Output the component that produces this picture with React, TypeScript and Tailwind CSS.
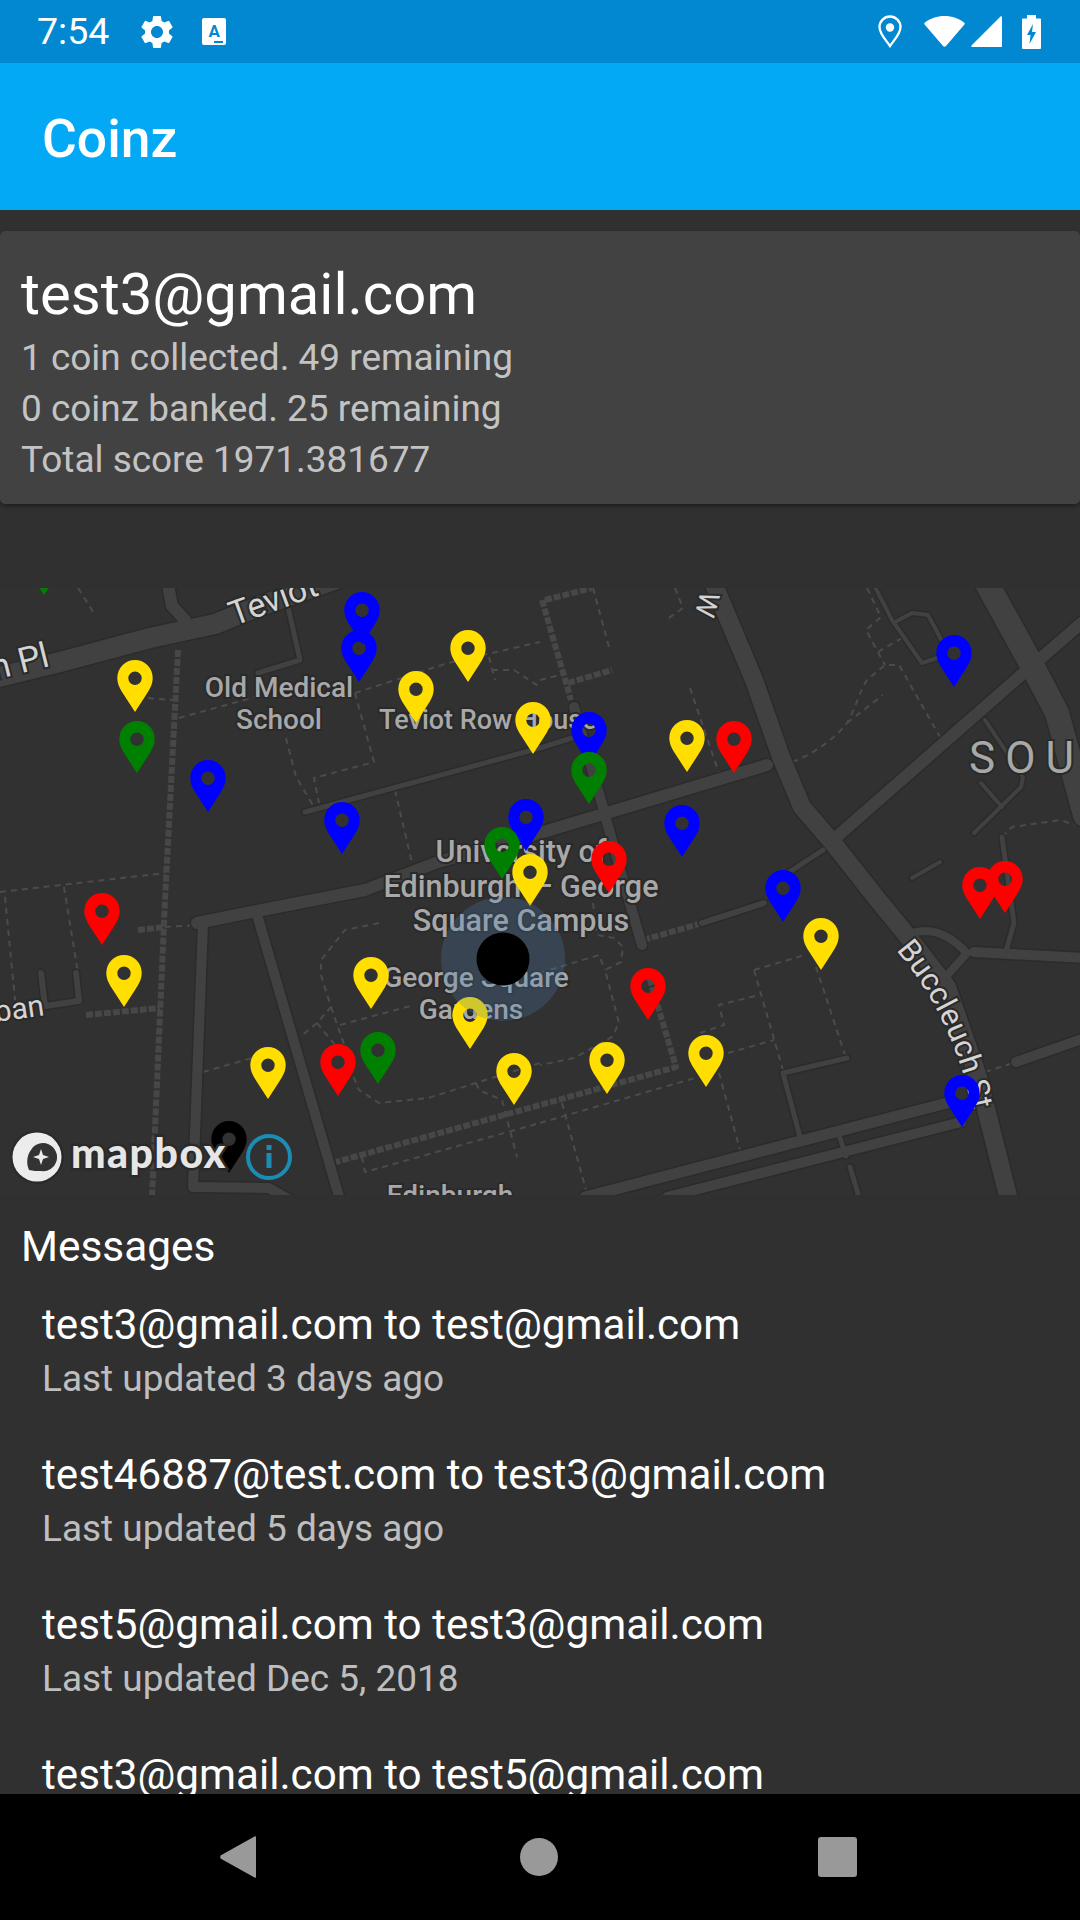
import { MdSettings } from 'react-icons/md';

type PinColor = '#ffde00' | '#0000ff' | '#ff0000' | '#008000' | '#000000';

const Y: PinColor = '#ffde00';
const B: PinColor = '#0000ff';
const R: PinColor = '#ff0000';
const G: PinColor = '#008000';

// tip of each marker, in page pixels, drawn in this order
const pins: [number, number, PinColor][] = [
  [44, 595, G],
  [362, 644, B],
  [359, 682, B],
  [468, 682, Y],
  [416, 723, Y],
  [135, 712, Y],
  [137, 773, G],
  [208, 812, B],
  [342, 854, B],
  [533, 754, Y],
  [954, 687, B],
  [589, 764, B],
  [589, 804, G],
  [687, 772, Y],
  [734, 773, R],
  [682, 857, B],
  [526, 851, B],
  [502, 879, G],
  [530, 906, Y],
  [609, 893, R],
  [783, 922, B],
  [1005, 913, R],
  [980, 919, R],
  [102, 945, R],
  [124, 1007, Y],
  [371, 1009, Y],
  [470, 1049, Y],
  [268, 1099, Y],
  [378, 1084, G],
  [338, 1096, R],
  [514, 1105, Y],
  [821, 970, Y],
  [648, 1020, R],
  [607, 1094, Y],
  [706, 1087, Y],
  [962, 1127, B],
  [229, 1173, '#000000'],
];

const roads: [string, number][] = [
  ['M-5 678 L60 662 L150 638 L215 624 L260 606 L345 576', 20],
  ['M168 585 L172 606 L185 620', 12],
  ['M282 580 L300 660 L258 673', 5],
  ['M305 812 L540 748 L572 738', 5],
  ['M197 923 L262 910 L365 890 L438 862 L540 833 L767 765', 12],
  ['M574 707 L598 790 L626 890 L642 945', 10],
  ['M203 923 L193 1187 L269 1188 L290 1200', 10],
  ['M258 918 L340 1200', 10],
  ['M702 923 L764 903', 6],
  ['M788 873 L823 850', 5],
  ['M712 580 L754 680 L781 757 L802 807 L833 843 L878 900 L905 933 L947 987 L978 1077 L1009 1200', 18],
  ['M833 840 L1019 677 L1085 620', 12],
  ['M985 580 L1033 667 L1057 713 L1085 815', 24],
  ['M585 1197 L947 1103', 11],
  ['M667 1197 L961 1122', 10],
  ['M1016 1062 L1085 1038', 10],
  ['M847 1058 L783 1073 L800 1137', 5],
  ['M840 1138 L846 1156', 5],
  ['M850 1167 L859 1197', 5],
  ['M912 933 C930 928 945 932 964 950', 8],
  ['M974 952 L1085 958', 10],
  ['M967 953 L943 980', 8],
  ['M1007 948 L1014 923 L1002 837', 5],
  ['M874 585 L892 620 L922 663 L940 657', 4],
  ['M895 622 L912 613 L928 615 L943 643', 4],
  ['M981 783 L1002 807', 4],
  ['M974 833 L1021 787 L1023 777 L985 720', 4],
  ['M940 862 L912 878', 4],
  ['M41 973 L45 1006 L79 1001 L76 973', 6],
];

// the stepped footpaths
const steps: string[] = [
  'M178 650 L165 900 L152 1197',
  'M542 600 L571 700',
  'M647 970 L676 1067 L336 1162',
  'M643 940 L702 923',
  'M568 683 L612 670',
  'M545 600 L592 588',
  'M138 930 L165 927',
  'M86 1015 L160 1008',
];

const paths: string[] = [
  'M78 588 L95 615',
  'M148 698 L172 700',
  'M179 718 L255 697',
  'M355 693 L448 663 L540 642',
  'M355 693 L374 762 L314 778 L319 803',
  'M286 738 L296 777 L314 807',
  'M489 657 L495 680',
  'M492 670 L514 670 L540 687',
  'M395 790 L412 863',
  'M0 892 L165 873',
  'M5 897 L15 1000',
  'M64 887 L78 973',
  'M165 927 L197 925',
  'M203 1072 L252 1058',
  'M379 923 L345 930 L321 960 L321 975 L331 1007 L317 1023 L300 1037',
  'M317 1023 L345 1057 L359 1090 L379 1103 L428 1098 L476 1083 L540 1063',
  'M340 1025 L414 1005',
  'M476 1083 L479 1090 L502 1100 L517 1157',
  'M331 1007 L345 1047',
  'M362 1157 L365 1172 L540 1123',
  'M593 903 L597 935 L614 938 L623 947 L621 962 L605 970 L619 1023 L612 1037 L574 1058 L540 1065',
  'M540 973 L599 955 L605 970',
  'M540 1123 L695 1078',
  'M562 1103 L586 1190',
  'M719 1073 L740 1150',
  'M728 1053 L774 1040',
  'M700 1033 L724 1025 L719 1005 L759 995',
  'M754 970 L783 1070',
  'M754 970 L805 955',
  'M816 967 L845 1055',
  'M593 588 L609 647',
  'M675 588 L683 608 L666 620',
  'M690 688 L719 773',
  'M540 680 L560 675',
  'M792 762 C816 753 835 738 847 723 C855 710 860 690 867 680 L885 665 L899 665 L940 737',
  'M847 723 L883 695',
  'M867 588 L881 617 L866 630 L885 665',
  'M878 652 L902 638',
  'M1002 837 L1012 827 L1061 820 L1074 825',
  'M985 1072 L1016 1062',
];

const Pin = ({ x, y, color }: { x: number; y: number; color: string }) => (
  <g transform={`translate(${x} ${y})`}>
    <path
      fill={color}
      fillRule="evenodd"
      d="M0 0L-11-17C-15-23-17.700-28-17.700-34.300A17.700 17.700 0 1 1 17.700-34.300C17.700-28 15-23 11-17ZM0-40.500A6.700 6.700 0 1 0 0-27.100A6.700 6.700 0 1 0 0-40.500Z"
    />
  </g>
);

const MapLabel = ({
  x,
  y,
  size = 28,
  children,
  anchor = 'middle',
}: {
  x: number;
  y: number;
  size?: number;
  children: string;
  anchor?: 'middle' | 'start';
}) => (
  <text
    x={x}
    y={y}
    textAnchor={anchor}
    fontSize={size}
    fontWeight="500"
    fill="#a8a8a8"
    stroke="#2a2a2a"
    strokeWidth="4"
    paintOrder="stroke"
  >
    {children}
  </text>
);

const RoadLabel = ({ transform, size, children }: { transform: string; size: number; children: string }) => (
  <text
    transform={transform}
    fontSize={size}
    fontWeight="400"
    fill="#d4d4d4"
    stroke="#2a2a2a"
    strokeWidth="4"
    paintOrder="stroke"
  >
    {children}
  </text>
);

const CityMap = () => (
  <svg
    viewBox="0 588 1080 607"
    className="block h-[607px] w-full shrink-0 bg-[#323131] font-['Roboto',sans-serif]"
  >
    <g fill="none" strokeLinecap="round" strokeLinejoin="round">
      {paths.map((d) => (
        <path key={d} d={d} stroke="#4b4b4b" strokeWidth="2" strokeDasharray="6 5" strokeLinecap="butt" />
      ))}
      {steps.map((d) => (
        <path key={d} d={d} stroke="#474747" strokeWidth="6" strokeDasharray="7 2" strokeLinecap="butt" />
      ))}
      {roads.map(([d, w]) => (
        <path key={d + 'c'} d={d} stroke="#2b2b2b" strokeWidth={w + 3} />
      ))}
      {roads.map(([d, w]) => (
        <path key={d} d={d} stroke="#414141" strokeWidth={w} />
      ))}
    </g>

    <MapLabel x={279} y={697}>Old Medical</MapLabel>
    <MapLabel x={279} y={729}>School</MapLabel>
    <MapLabel x={379} y={729} anchor="start" size={27}>Teviot Row House</MapLabel>
    <MapLabel x={521} y={862} size={30.500}>University of</MapLabel>
    <MapLabel x={521} y={897} size={30.500}>Edinburgh — George</MapLabel>
    <MapLabel x={521} y={931} size={30.500}>Square Campus</MapLabel>
    <MapLabel x={476} y={987}>George Square</MapLabel>
    <MapLabel x={471} y={1019}>Gardens</MapLabel>
    <MapLabel x={450} y={1205}>Edinburgh</MapLabel>

    <RoadLabel transform="translate(-6 680) rotate(-14)" size={35}>n Pl</RoadLabel>
    <RoadLabel transform="translate(234 626) rotate(-20)" size={34}>Teviot</RoadLabel>
    <RoadLabel transform="translate(-4 1022) rotate(-8)" size={30}>ban</RoadLabel>
    <RoadLabel transform="translate(701 590) rotate(105)" size={28}>W</RoadLabel>
    <text
      x={969}
      y={773}
      fontSize="44"
      letterSpacing="10"
      fill="#a8a8a8"
      stroke="#2a2a2a"
      strokeWidth="4"
      paintOrder="stroke"
    >
      SOUTH
    </text>
    <path id="buccleuch" d="M896 950Q960 1025 978 1138" fill="none" />
    <text fontSize="31" fill="#d4d4d4" stroke="#2a2a2a" strokeWidth="4" paintOrder="stroke">
      <textPath href="#buccleuch">Buccleuch St</textPath>
    </text>

    {pins.map(([x, y, color]) => (
      <Pin key={`${x}-${y}`} x={x} y={y} color={color} />
    ))}

    {/* user location */}
    <circle cx="503" cy="959" r="62" fill="#4a7fb5" fillOpacity="0.25" />
    <circle cx="503" cy="959" r="26.500" fill="#000000" />

    {/* mapbox logo */}
    <circle cx="37" cy="1157" r="27" fill="#2a2a2a" />
    <circle cx="37" cy="1157" r="24.500" fill="#ececec" />
    <path d="M29 1170C26 1163 27 1155 31 1150A14 14 0 1 1 41 1171C37 1171 33 1171 29 1170Z" fill="#333333" />
    <path d="M41 1149L43 1155L49 1157L43 1159L41 1165L39 1159L33 1157L39 1155Z" fill="#ececec" />
    <text
      x={71}
      y={1168}
      fontSize="41"
      fontWeight="900"
      letterSpacing="1.500"
      fill="#e6e6e6"
      stroke="#2a2a2a"
      strokeWidth="5"
      paintOrder="stroke"
      fontFamily="Lato, sans-serif"
    >
      mapbox
    </text>
    <circle cx="269" cy="1157" r="21" fill="none" stroke="#1b8db5" strokeWidth="4" />
    <rect x="266.500" y="1153" width="5" height="15" fill="#1b8db5" />
    <rect x="266.500" y="1145" width="5" height="5" fill="#1b8db5" />
  </svg>
);

const StatusBar = () => (
  <div className="flex h-[63px] shrink-0 items-center justify-between bg-[#0288d1] pl-[37px] pr-[39px] text-white">
    <div className="flex items-center">
      <span className="text-[37.500px] leading-none">7:54</span>
      <MdSettings className="ml-[28px] h-[40px] w-[40px]" />
      <div className="relative ml-[25px] flex h-[27px] w-[24px] items-center justify-center rounded-[2px] bg-white">
        <span className="text-[17px] font-bold leading-none text-[#0288d1]">A</span>
        <span className="absolute bottom-[2px] right-[3px] h-[2px] w-[9px] bg-[#0288d1]" />
      </div>
    </div>
    <div className="flex items-center">
      <svg viewBox="0 0 24 33" className="h-[33px] w-[24px]" fill="none" stroke="currentColor" strokeWidth="2.300">
        <path d="M12 31C8 25 1.500 19 1.500 12A10.500 10.500 0 0 1 22.500 12C22.500 19 16 25 12 31Z" />
        <circle cx="12" cy="12.500" r="4.200" fill="currentColor" stroke="none" />
      </svg>
      <svg viewBox="0 0 41 31" className="ml-[22px] h-[31px] w-[41px]" fill="currentColor">
        <path d="M19 30L1 9C0 8 0 7 1 6.500C6 2.500 13 0 20.500 0S35 2.500 40 6.500C41 7 41 8 40 9L22 30C21 31 20 31 19 30Z" />
      </svg>
      <svg viewBox="0 0 31 31" className="ml-[6px] h-[31px] w-[31px]" fill="currentColor">
        <path d="M31 1V30A1 1 0 0 1 30 31H1C0 31 0 30 .5 29.500L29.500 .5C30 0 31 0 31 1Z" />
      </svg>
      <svg viewBox="0 0 19 34" className="ml-[20px] h-[34px] w-[19px]">
        <path fill="#ffffff" d="M5 0H14V3.500H18A1 1 0 0 1 19 4.500V33A1 1 0 0 1 18 34H1A1 1 0 0 1 0 33V4.500A1 1 0 0 1 1 3.500H5Z" />
        <path fill="#0288d1" d="M11 9L5 20H8.500L7.500 29L14 17H10Z" />
      </svg>
    </div>
  </div>
);

const messages = [
  { title: 'test3@gmail.com to test@gmail.com', updated: 'Last updated 3 days ago' },
  { title: 'test46887@test.com to test3@gmail.com', updated: 'Last updated 5 days ago' },
  { title: 'test5@gmail.com to test3@gmail.com', updated: 'Last updated Dec 5, 2018' },
  { title: 'test3@gmail.com to test5@gmail.com', updated: 'Last updated Dec 5, 2018' },
];

export default function App() {
  return (
    <div className="flex h-[1920px] w-[1080px] flex-col overflow-hidden bg-[#303030] font-['Roboto',sans-serif] text-white">
      <StatusBar />

      <header className="flex h-[147px] shrink-0 items-center bg-[#03a9f4] pl-[42px] pt-[4px]">
        <h1 className="text-[53.400px] font-medium leading-none">Coinz</h1>
      </header>

      <main className="flex min-h-0 flex-1 flex-col overflow-hidden">
        <section className="mt-[21px] h-[273px] shrink-0 rounded-[5px] bg-[#424242] pl-[21px] pt-[30px] shadow-[0_2px_4px_rgba(0,0,0,0.4)]">
          <p className="text-[58px] leading-[66px]">test3@gmail.com</p>
          <div className="mt-[5px] text-[36.950px] leading-[51px] text-white/70">
            <p>1 coin collected. 49 remaining</p>
            <p>0 coinz banked. 25 remaining</p>
            <p>Total score 1971.381677</p>
          </div>
        </section>

        <div className="mt-[84px]">
          <CityMap />
        </div>

        <section className="pt-[26px]">
          <h2 className="pl-[21px] text-[42.400px] leading-[52px]">Messages</h2>
          <ul className="mt-[26px] pl-[42px]">
            {messages.map((m) => (
              <li key={m.title} className="h-[150px]">
                <p className="text-[42.200px] leading-[52px]">{m.title}</p>
                <p className="mt-[2px] text-[36.950px] leading-[52px] text-white/70">{m.updated}</p>
              </li>
            ))}
          </ul>
        </section>
      </main>

      <nav className="flex h-[126px] shrink-0 items-center bg-black pl-[220px]">
        <svg viewBox="0 0 36 42" className="h-[42px] w-[36px]" fill="#999999">
          <path d="M36 1V41C36 42 35 42 34.500 41.500L.5 22.500Q0 21 .5 19.500L34.500 .5C35 0 36 0 36 1Z" />
        </svg>
        <span className="ml-[264px] h-[38px] w-[38px] rounded-full bg-[#999999]" />
        <span className="ml-[260px] h-[40px] w-[39px] rounded-[3px] bg-[#999999]" />
      </nav>
    </div>
  );
}
